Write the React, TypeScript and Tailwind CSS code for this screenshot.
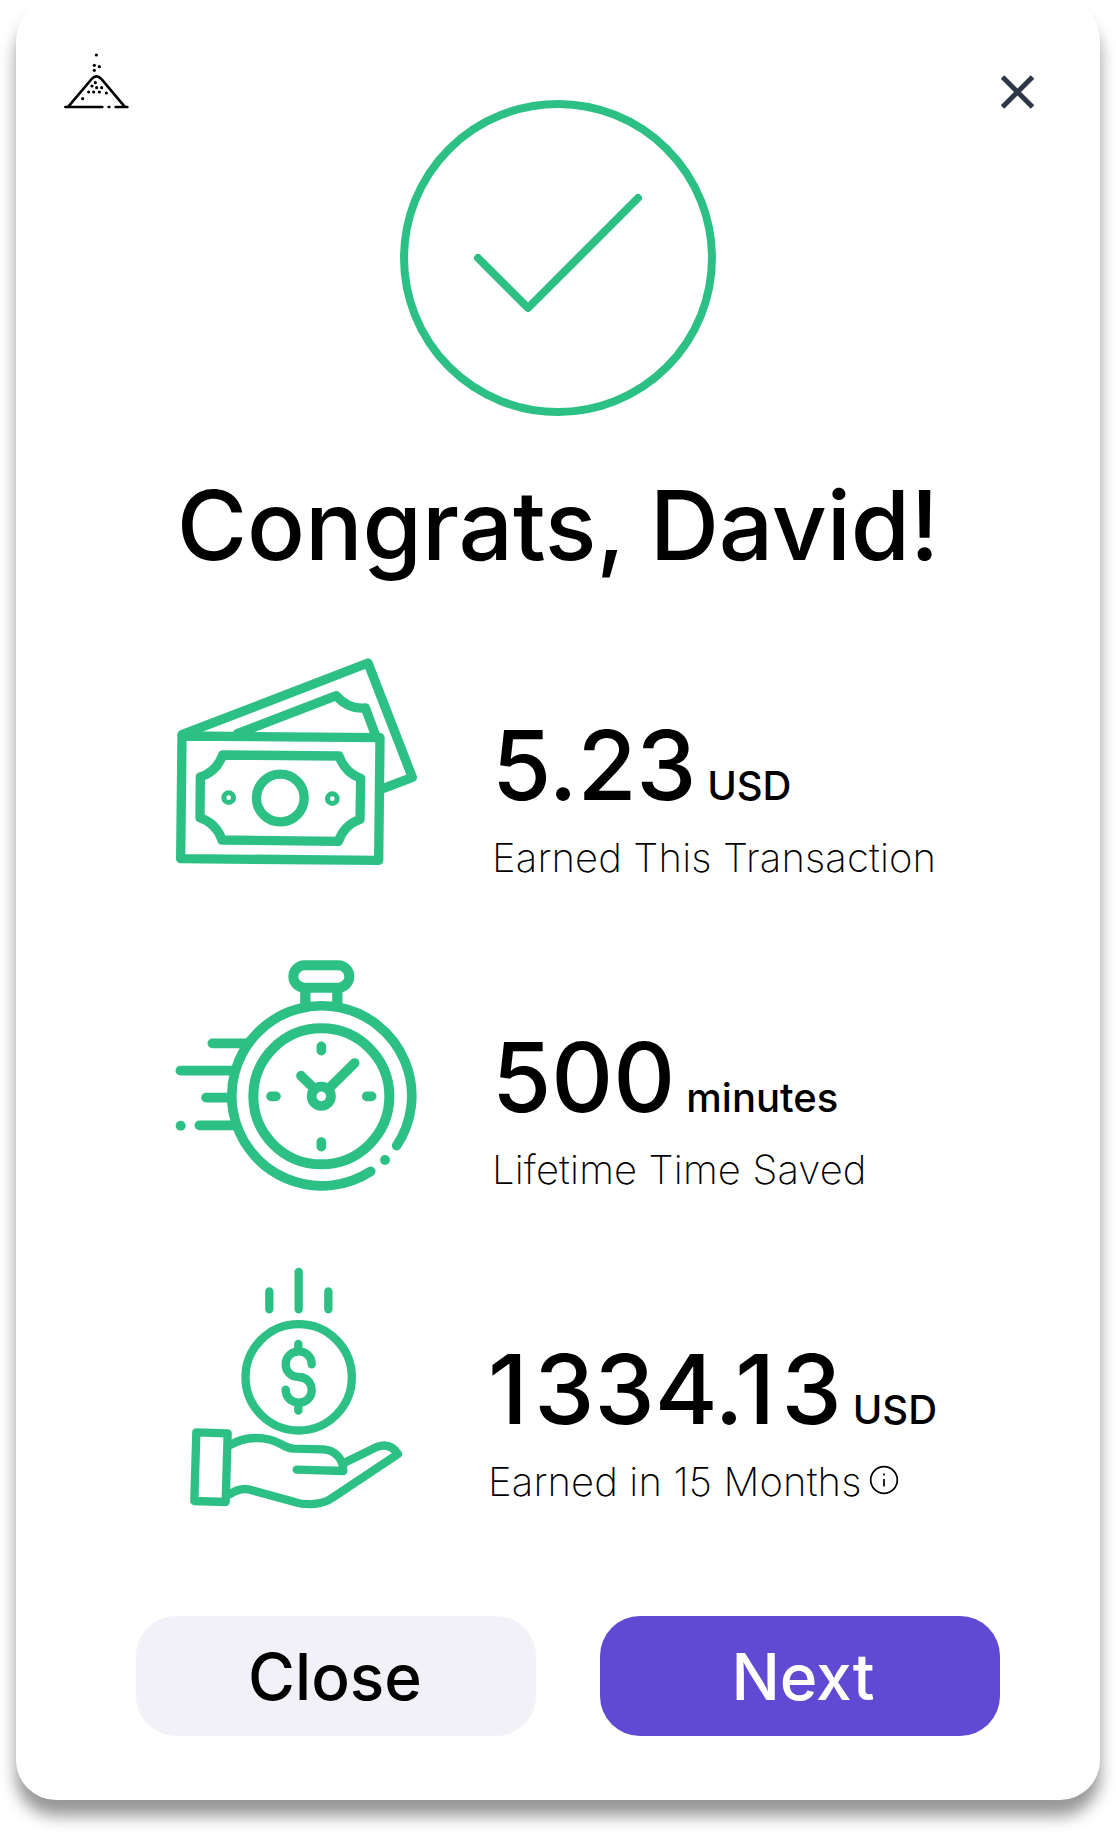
import type { ReactNode } from "react";

const GREEN = "#2dc084";

function Logo() {
  return (
    <svg className="mt-10 ml-[34px] h-20 w-[100px]" viewBox="0 0 300 240" fill="none" stroke="#000" strokeWidth="8" strokeLinecap="round">
      <path d="M46 201H157M176 201h2M197 201H232M55 200L125 117Q139 101 154 117L224 200" />
      <g fill="#000" stroke="none">
        {[[139, 45], [133, 76], [148, 80], [133, 91], [136, 128], [126, 138], [140, 143], [155, 143], [116, 156], [131, 156], [148, 156], [169, 159], [98, 176]].map(([x, y]) => (
          <circle key={`${x}-${y}`} cx={x} cy={y} r="4.8" />
        ))}
      </g>
    </svg>
  );
}

function SuccessMark() {
  return (
    <svg className="mt-[100px] ml-[250px] size-[316px]" viewBox="30 30 948 948" fill="none" stroke={GREEN} strokeWidth="24" strokeLinecap="round" strokeLinejoin="round">
      <circle cx="504" cy="504" r="462" />
      <path d="M264 504L414 654L744 324" />
    </svg>
  );
}

function CashIcon() {
  return (
    <svg className="h-[250px] w-[270px] shrink-0" viewBox="0 0 810 750" fill="none" stroke={GREEN} strokeWidth="28" strokeLinecap="round" strokeLinejoin="round">
      <path d="M66 288L660 293L656 661L62 656Z" />
      <path d="M66 284L624 69L757 412L668 446" />
      <path d="M232 281L529 167Q564 208 616 204L646 284" />
      <path d="M188 345L537 348Q555 398 602 415L600 538Q553 554 535 604L186 600Q170 551 120 533L121 411Q170 395 188 345Z" />
      <circle cx="361" cy="474" r="71.500" strokeWidth="28" />
      <circle cx="206" cy="473" r="14.500" strokeWidth="15" />
      <circle cx="517" cy="476" r="14.500" strokeWidth="15" />
    </svg>
  );
}

function StopwatchIcon() {
  return (
    <svg className="h-[250px] w-[270px] shrink-0" viewBox="0 36 810 750" fill="none" stroke={GREEN} strokeWidth="29" strokeLinecap="round" strokeLinejoin="round">
      <rect x="400" y="76" width="168" height="67" rx="33.500" strokeWidth="30" />
      <path d="M436 152V194M532 152V194" strokeWidth="31" strokeLinecap="butt" />
      <path d="M710 617A270 270 0 1 0 632 694" strokeWidth="29" />
      <circle cx="484" cy="469" r="204" strokeWidth="30" />
      <circle cx="484" cy="469" r="29" />
      <path d="M464 447L423 407M505 447L584 369M484 319V332M484 606V620M333 469H348M620 469H635" />
      <path d="M157 310H258M61 392H220M138 473H212M118 556H226" />
      <g fill={GREEN} stroke="none">
        <circle cx="62" cy="557" r="15" />
        <circle cx="675" cy="660" r="15" />
      </g>
    </svg>
  );
}

function HandCoinIcon() {
  return (
    <svg className="h-[250px] w-[270px] shrink-0" viewBox="0 42 810 750" fill="none" stroke={GREEN} strokeWidth="25" strokeLinecap="round" strokeLinejoin="round">
      <path d="M416 66V178M328 124V178M505 124V178" />
      <circle cx="416" cy="382" r="159.500" />
      <path d="M455 343C455 320 438 304 416 304C394 304 377 321 377 343C377 366 394 381 416 381C439 381 455 398 455 420C455 443 438 458 416 458C394 458 377 442 377 419M415 282V304M415 458V482" />
      <path d="M109 547L203 550L197 756L103 753Z" />
      <path d="M211 585C255 558 317 557 362 582C380 592 386 595 400 596L490 598C526 600 550 628 550 663L410 659" />
      <path d="M552 639L650 591C679 580 700 590 714 612L516 744C492 762 440 768 407 757L265 718C244 714 225 722 209 733" />
    </svg>
  );
}

function Stat({ icon, value, unit, label, className, info }: {
  icon: ReactNode;
  value: ReactNode;
  unit: string;
  label: string;
  className: string;
  info?: boolean;
}) {
  return (
    <div className="flex h-[312px] items-start pl-36">
      {icon}
      <div className={`pt-[67px] whitespace-nowrap ${className}`}>
        <div className="flex items-baseline gap-[11px] font-medium">
          <span className="text-[96px] leading-[116px]">{value}</span>
          <span className="text-[40px] leading-[48px]">{unit}</span>
        </div>
        <div className="mt-[11px] flex items-center text-[40px] leading-[48px] font-extralight tracking-[0.14px]">
          {label}
          {info && (
            <svg className="mb-1 ml-[7px] size-[30px]" viewBox="0 0 30 30" fill="none" stroke="#000" strokeWidth="1.700">
              <circle cx="15" cy="15" r="13.300" />
              <path d="M15 14V21.500M15 8.500V10.500" />
            </svg>
          )}
        </div>
      </div>
    </div>
  );
}

export default function App() {
  return (
    <div className="h-[1832px] w-[1116px] overflow-hidden bg-white px-4 font-['Inter',sans-serif] text-black">
      <main className="flex h-[1800px] w-[1084px] flex-col rounded-[40px] bg-white shadow-[0_16px_16px_rgba(0,0,0,0.41)]">
        <header className="flex h-[467px] items-start">
          <Logo />
          <SuccessMark />
          <button aria-label="Dismiss" className="mt-[75px] ml-[285px]">
            <svg className="size-[34px]" viewBox="0 0 34 34" fill="none" stroke="#2d3748" strokeWidth="5">
              <path d="M1.500 2L31.500 32M31.500 2L1.500 32" />
            </svg>
          </button>
        </header>
        <h1 className="h-[173px] text-center text-[96px] leading-[116px] font-medium tracking-[-0.12px] whitespace-nowrap">Congrats, David!</h1>
        <section>
          <Stat icon={<CashIcon />} value={<span className="tracking-[-0.3px]">5.23</span>} unit="USD" label="Earned This Transaction" className="ml-[62px]" />
          <Stat icon={<StopwatchIcon />} value="500" unit="minutes" label="Lifetime Time Saved" className="ml-[62px]" />
          <Stat
            icon={<HandCoinIcon />}
            value={<>1<span className="mx-[6.500px]">334.1</span>3</>}
            unit="USD"
            label="Earned in 15 Months"
            className="ml-[58px]"
            info
          />
        </section>
        <footer className="mt-10 flex gap-16 pl-[120px] text-[64px] font-medium">
          <button className="h-[120px] w-[400px] rounded-[40px] bg-[#f2f1f7] pt-0.5 pr-0.5">Close</button>
          <button className="h-[120px] w-[400px] rounded-[40px] bg-[#604ad3] pt-0.5 pl-1.5 text-white">Next</button>
        </footer>
      </main>
    </div>
  );
}
